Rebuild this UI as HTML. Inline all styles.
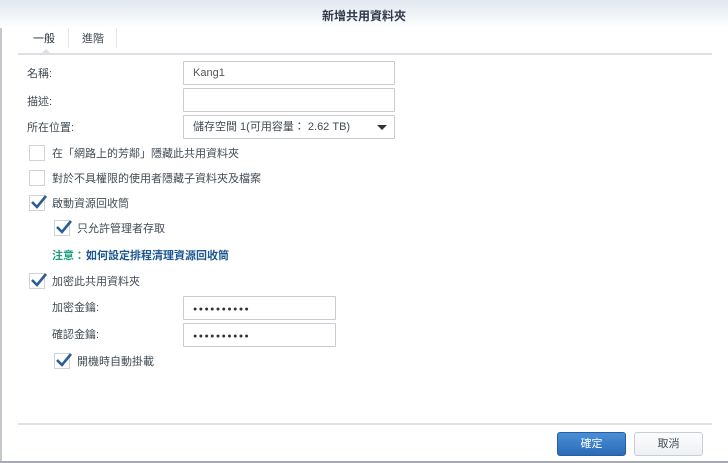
<!DOCTYPE html><html><head><meta charset="utf-8"><style>
*{margin:0;padding:0;box-sizing:border-box}
body{width:728px;height:463px;overflow:hidden;background:#fff;font-family:"Liberation Sans","Noto Sans CJK TC",sans-serif;font-size:11px;color:#414b55;position:relative}
.a{position:absolute}
.hdr{left:0;top:0;width:728px;height:28px;background:linear-gradient(#e2e8f0,#fdfefe)}
.title{left:0;width:728px;top:7px;text-align:center;font-size:12px;font-weight:bold;color:#2f3a4a}
.inp{border:1px solid #c8ccd2;background:#fff;height:24px;border-radius:1px;padding:0 9px;line-height:23px;font-size:11px}
.cb{width:16px;height:16px;border:1px solid #d0d4d9;background:#fff}
.dots{letter-spacing:1.5px;font-size:7px;color:#333;position:relative;top:0}
</style></head><body>
<div class="a" style="left:0;top:0;width:2px;height:463px;background:#c4c8cd"></div>
<div class="a" style="left:0;top:461px;width:728px;height:2px;background:#a8acb2"></div>
<div class="a hdr"></div>
<div class="a title">新增共用資料夾</div>
<div class="a" style="left:33px;top:30px;font-size:11px;color:#1d2a3a">一般</div>
<div class="a" style="left:68px;top:28px;width:1px;height:20px;background:#e2e5e9"></div>
<div class="a" style="left:82px;top:30px;color:#414b55">進階</div>
<div class="a" style="left:116px;top:28px;width:1px;height:20px;background:#e2e5e9"></div>
<div class="a" style="left:18px;top:53px;width:694px;height:2px;background:#dde0e4"></div>
<div class="a" style="left:41px;top:49px;width:0;height:0;border-left:5px solid transparent;border-right:5px solid transparent;border-bottom:5px solid #dde0e4"></div>
<div class="a" style="left:27px;top:65px">名稱:</div>
<div class="a inp" style="left:183px;top:61px;width:212px;color:#555">Kang1</div>
<div class="a" style="left:27px;top:93px">描述:</div>
<div class="a inp" style="left:183px;top:88px;width:212px"></div>
<div class="a" style="left:27px;top:119px">所在位置:</div>
<div class="a inp" style="left:183px;top:115px;width:212px;color:#414b55">儲存空間 1(可用容量： 2.62 TB)</div>
<div class="a" style="left:377px;top:125px;border-left:5px solid transparent;border-right:5px solid transparent;border-top:5px solid #333"></div>
<div class="a cb" style="left:29px;top:145px"></div>
<div class="a" style="left:52px;top:145px">在「網路上的芳鄰」隱藏此共用資料夾</div>
<div class="a cb" style="left:29px;top:170px"></div>
<div class="a" style="left:52px;top:170px">對於不具權限的使用者隱藏子資料夾及檔案</div>
<div class="a cb" style="left:29px;top:195px"></div>
<svg class="a" style="left:30px;top:194px" width="18" height="16"><path d="M2 8 L7 13 L16 2" stroke="#2b5d96" stroke-width="2.6" fill="none"/></svg>
<div class="a" style="left:52px;top:195px">啟動資源回收筒</div>
<div class="a cb" style="left:54px;top:220px"></div>
<svg class="a" style="left:55px;top:219px" width="18" height="16"><path d="M2 8 L7 13 L16 2" stroke="#2b5d96" stroke-width="2.6" fill="none"/></svg>
<div class="a" style="left:77px;top:220px">只允許管理者存取</div>
<div class="a" style="left:52px;top:247px;font-weight:bold;color:#1a9e80">注意：</div>
<div class="a" style="left:86px;top:247px;font-weight:bold;color:#1c5690">如何設定排程清理資源回收筒</div>
<div class="a cb" style="left:29px;top:273px"></div>
<svg class="a" style="left:30px;top:272px" width="18" height="16"><path d="M2 8 L7 13 L16 2" stroke="#2b5d96" stroke-width="2.6" fill="none"/></svg>
<div class="a" style="left:52px;top:273px">加密此共用資料夾</div>
<div class="a" style="left:52px;top:299px">加密金鑰:</div>
<div class="a inp" style="left:183px;top:296px;width:153px"><span class="dots">●●●●●●●●●●</span></div>
<div class="a" style="left:52px;top:326px">確認金鑰:</div>
<div class="a inp" style="left:183px;top:323px;width:153px"><span class="dots">●●●●●●●●●●</span></div>
<div class="a cb" style="left:54px;top:353px"></div>
<svg class="a" style="left:55px;top:352px" width="18" height="16"><path d="M2 8 L7 13 L16 2" stroke="#2b5d96" stroke-width="2.6" fill="none"/></svg>
<div class="a" style="left:77px;top:353px">開機時自動掛載</div>
<div class="a" style="left:18px;top:423px;width:694px;height:2px;background:#e0e3e6"></div>
<div class="a" style="left:557px;top:432px;width:69px;height:24px;border-radius:3px;background:linear-gradient(#4a8fd6,#2b6bb8);border:1px solid #255fa3;color:#fff;text-align:center;line-height:22px">確定</div>
<div class="a" style="left:634px;top:432px;width:69px;height:24px;border-radius:3px;background:linear-gradient(#fbfcfd,#eef1f4);border:1px solid #c9ced5;color:#414b55;text-align:center;line-height:22px">取消</div>
</body></html>
